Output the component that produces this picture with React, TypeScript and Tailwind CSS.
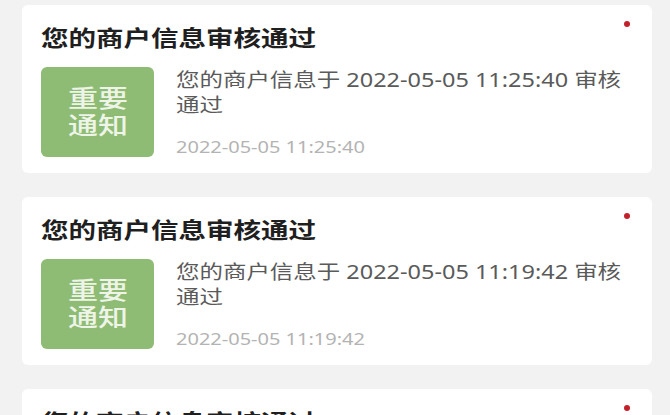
import React from "react";

const notices = [
  { time: "2022-05-05 11:25:40" },
  { time: "2022-05-05 11:19:42" },
  { time: "2022-05-05 11:12:08" },
];

const NoticeCard = ({ time }: { time: string }) => (
  <div className="relative bg-white rounded-md pt-[17px] pb-4 px-[19px]">
    <span className="absolute top-4 right-[22px] w-[6px] h-[6px] rounded-full bg-[#c4202a]" />
    <h2 className="h-[30px] text-[22px] leading-[30px] font-bold text-[#1f1f1f]">
      <span className="inline-block origin-left scale-x-[1.25] whitespace-nowrap">
        您的商户信息审核通过
      </span>
    </h2>
    <div className="flex mt-[15px] gap-[22px]">
      <div
        className="w-[113px] h-[90px] shrink-0 rounded-md bg-[#8fbc74] flex flex-col items-center justify-center text-[24px] leading-[27px] font-medium text-[#eef5e8]"
        style={{ fontFamily: '"Liberation Sans", "Noto Sans CJK SC", sans-serif' }}
      >
        <span className="inline-block scale-x-[1.25]">重要</span>
        <span className="inline-block scale-x-[1.25]">通知</span>
      </div>
      <div className="flex flex-col pt-px">
        <p className="w-[363px] origin-left scale-x-[1.235] text-[19px] leading-[25px] text-[#5a5a5a]">
          {`您的商户信息于 ${time} 审核通过`}
        </p>
        <p className="mt-[19px] w-[200px] origin-left scale-x-[1.25] text-[16px] leading-[20px] text-[#b3b3b3]">
          {time}
        </p>
      </div>
    </div>
  </div>
);

export default function App() {
  return (
    <div
      className="w-[670px] h-[415px] overflow-hidden bg-[#f2f2f2] pt-[5px] pl-[22px] pr-[18px] flex flex-col gap-6"
      style={{ fontFamily: '"Noto Sans", "Noto Sans CJK SC", sans-serif' }}
    >
      {notices.map((n) => (
        <NoticeCard key={n.time} time={n.time} />
      ))}
    </div>
  );
}
